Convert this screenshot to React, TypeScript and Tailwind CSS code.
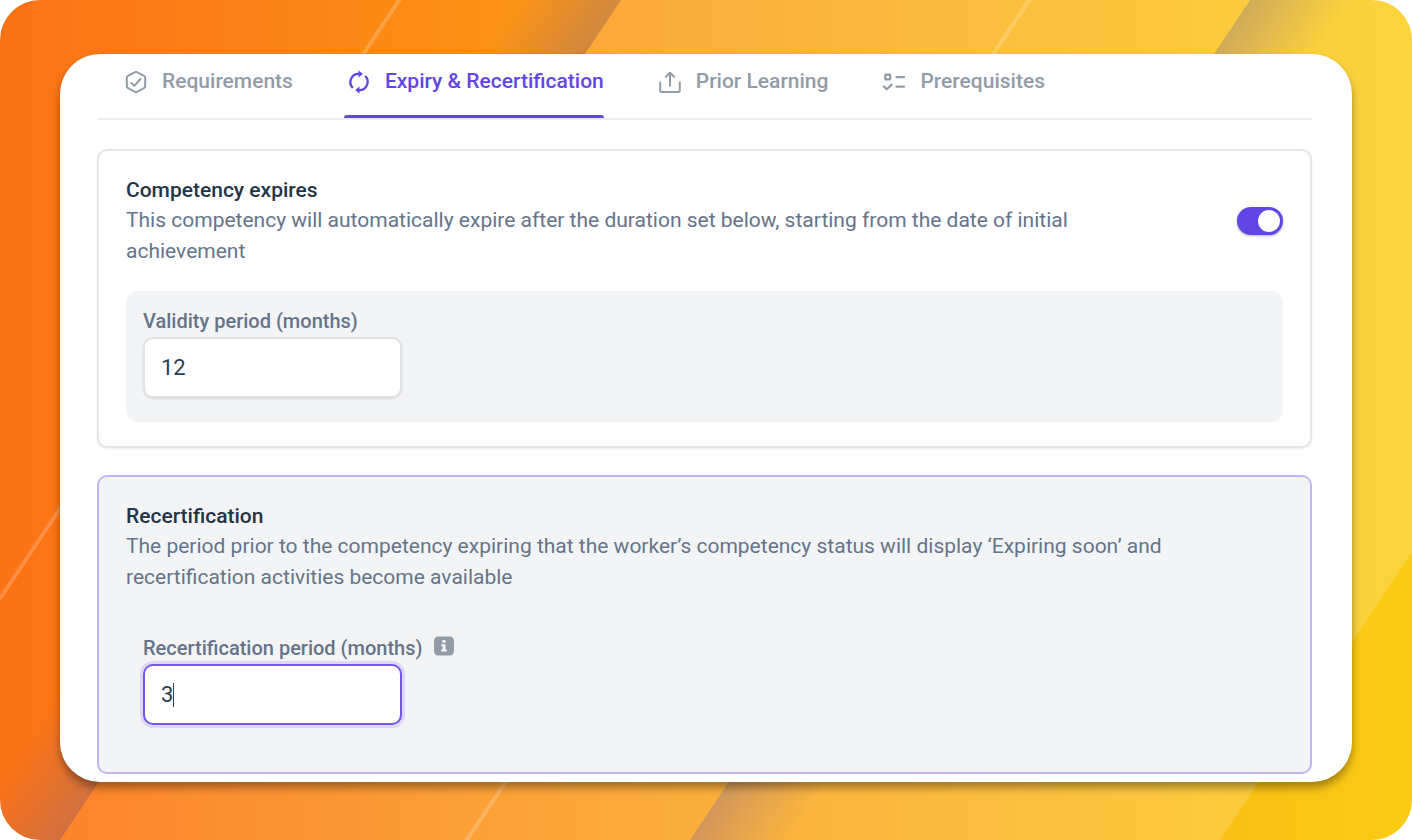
import { useState } from "react";
import type { ReactNode } from "react";
import clsx from "clsx";

interface Tab {
  id: string;
  label: string;
  icon: ReactNode;
}

const tabs: Tab[] = [
  { id: "requirements", label: "Requirements", icon: <HexCheckIcon /> },
  { id: "expiry", label: "Expiry & Recertification", icon: <RenewIcon /> },
  { id: "prior", label: "Prior Learning", icon: <UploadIcon /> },
  { id: "prerequisites", label: "Prerequisites", icon: <ChecklistIcon /> },
];

function HexCheckIcon() {
  return (
    <svg viewBox="0 0 24 24" className="size-6" fill="none" stroke="currentColor" strokeWidth="2" strokeLinecap="round" strokeLinejoin="round">
      <path d="M11 2.1a2.2 2.2 0 0 1 2 0l7 3.7a2.2 2.2 0 0 1 1.2 2v8.4a2.2 2.2 0 0 1-1.2 2l-7 3.7a2.2 2.2 0 0 1-2 0l-7-3.7a2.2 2.2 0 0 1-1.2-2V7.8a2.2 2.2 0 0 1 1.2-2z" />
      <path d="m7.2 13 3.1 2.8 6.2-6.8" />
    </svg>
  );
}

function RenewIcon() {
  return (
    <svg viewBox="0 0 24 24" className="size-6" fill="none" stroke="currentColor" strokeWidth="2.3">
      <path d="M5.8 18A8.3 8.3 0 0 1 12.500 3.900" />
      <path d="M18.2 6A8.3 8.3 0 0 1 11.500 20.100" />
      <path d="M11.500 .2v7.400l4.300-3.700z" fill="currentColor" stroke="none" />
      <path d="M12.500 23.800v-7.400l-4.300 3.700z" fill="currentColor" stroke="none" />
    </svg>
  );
}

function UploadIcon() {
  return (
    <svg viewBox="0 0 24 24" className="size-6" fill="none" stroke="currentColor" strokeWidth="2" strokeLinecap="round" strokeLinejoin="round">
      <path d="M2.2 12.5v8a1.5 1.5 0 0 0 1.5 1.5h16.6a1.5 1.5 0 0 0 1.5-1.5v-8" />
      <path d="M12 15.8V3M7.8 6.9 12 2.7l4.2 4.2" />
    </svg>
  );
}

function ChecklistIcon() {
  return (
    <svg viewBox="0 0 24 24" className="size-6" fill="none" stroke="currentColor" strokeWidth="2.2" strokeLinecap="round" strokeLinejoin="round">
      <rect x="3.3" y="4.6" width="4.8" height="4.8" rx=".3" />
      <path d="M14.5 7.2h7.5M14.5 16.7h7.5" />
      <path d="m1.8 16.4 3 2.9 4.8-4.7" />
    </svg>
  );
}

function InfoIcon() {
  return (
    <svg viewBox="0 0 20 20" className="size-5">
      <rect width="20" height="19" y=".5" rx="4.5" fill="#919ca8" />
      <path d="M8.3 4h3.2v2.7H8.3zM7.2 8.2h4.3v5.4h1.4v2H7.2v-2h1.4v-3.400H7.2z" fill="#f3f4f6" />
    </svg>
  );
}

function Backdrop() {
  return (
    <svg viewBox="0 0 1412 840" preserveAspectRatio="none" className="absolute inset-0 -z-10 size-full" aria-hidden="true">
      <defs>
        <linearGradient id="base" x1="0" x2="1" y1="0" y2="0">
          <stop offset="0" stopColor="#fc7216" />
          <stop offset="1" stopColor="#facc15" />
        </linearGradient>
        <linearGradient id="sheen" x1="0" x2="1" y1="0" y2="0">
          <stop offset="0" stopColor="#fff" stopOpacity=".1" />
          <stop offset=".5" stopColor="#fff" stopOpacity=".17" />
          <stop offset="1" stopColor="#fff" stopOpacity=".17" />
        </linearGradient>
        <linearGradient id="shadeLeft" gradientUnits="userSpaceOnUse" x1="621" y1="0" x2="552" y2="-46">
          <stop offset="0" stopColor="#7060a0" stopOpacity=".3" />
          <stop offset="1" stopColor="#7060a0" stopOpacity="0" />
        </linearGradient>
        <linearGradient id="shadeRight" gradientUnits="userSpaceOnUse" x1="1250" y1="0" x2="1319" y2="46">
          <stop offset="0" stopColor="#7060a0" stopOpacity=".3" />
          <stop offset="1" stopColor="#7060a0" stopOpacity="0" />
        </linearGradient>
      </defs>
      <path d="M0 0h1412v840H0z" fill="url(#base)" />
      <path d="M621 0H0v840h60z" fill="url(#shadeLeft)" />
      <path d="M621 0h791v552l-192 288H60z" fill="url(#sheen)" />
      <path d="M1250 0h162v840H690z" fill="url(#shadeRight)" />
      <path d="M400-1-1 600M1030-1 466 841" stroke="#fff" strokeOpacity=".2" strokeWidth="4" />
    </svg>
  );
}

interface NumberFieldProps {
  id: string;
  label: string;
  value: string;
  onChange: (value: string) => void;
  info?: boolean;
  focused?: boolean;
}

function NumberField({ id, label, value, onChange, info, focused }: NumberFieldProps) {
  return (
    <div>
      <div className="flex items-center gap-3">
        <label htmlFor={id} className="text-[20px] leading-8 font-medium text-[#64748b]">
          {label}
        </label>
        {info && (
          <button type="button" aria-label={`About ${label}`} className="pb-1">
            <InfoIcon />
          </button>
        )}
      </div>
      <div
        className={clsx(
          "relative flex h-[61px] w-[259px] items-center rounded-[10px] border-2 bg-white",
          focused
            ? "border-[#7655ea] shadow-[0_0_0_3px_#ddd8f9]"
            : "border-[#e0e2e5] shadow-[0_1px_2px_rgba(0,0,0,0.12)]"
        )}
      >
        <input
          id={id}
          inputMode="numeric"
          value={value}
          onChange={(e) => onChange(e.target.value)}
          className="size-full bg-transparent px-4 text-[22px] text-[#2c3e50] caret-transparent outline-none"
        />
        {focused && <span className="absolute left-[28px] h-6 w-px bg-[#2c3e50]" />}
      </div>
    </div>
  );
}

export default function App() {
  const [activeTab, setActiveTab] = useState("expiry");
  const [expires, setExpires] = useState(true);
  const [validity, setValidity] = useState("12");
  const [recertification, setRecertification] = useState("3");

  return (
    <div className="relative isolate min-h-screen overflow-hidden rounded-[40px] px-[60px] pt-[54px] pb-[58px] font-[Roboto,sans-serif]">
      <Backdrop />
      <main className="rounded-[40px] bg-white pr-10 pb-2 pl-[37px] shadow-[0_6px_9px_rgba(0,0,0,0.35)]">
        <nav role="tablist" className="flex h-[66px] gap-[51px] border-b-2 border-[#ececee] pl-6">
          {tabs.map((tab) => (
            <button
              key={tab.id}
              type="button"
              role="tab"
              aria-selected={tab.id === activeTab}
              onClick={() => setActiveTab(tab.id)}
              className={clsx(
                "relative flex h-full items-center gap-[14px] pb-2 pl-[3px] text-[21px] font-medium whitespace-nowrap",
                tab.id === activeTab ? "text-[#6246e5]" : "text-[#919ca8]"
              )}
            >
              {tab.icon}
              {tab.label}
              {tab.id === activeTab && (
                <span className="absolute inset-x-0 bottom-0 h-[3px] rounded-t-full bg-[#6246e5]" />
              )}
            </button>
          ))}
        </nav>

        <section className="mt-[29px] rounded-[10px] border-2 border-[#e5e6e8] px-[27px] pt-6 pb-6 shadow-[0_1px_2px_rgba(0,0,0,0.08)]">
          <div className="flex items-center justify-between">
            <div className="max-w-[1060px] text-[21px] leading-[31px] text-[#64748b]">
              <h2 className="leading-[30px] font-medium text-[#243447]">Competency expires</h2>
              <p id="expires-help">
                This competency will automatically expire after the duration set below, starting from the date of
                initial achievement
              </p>
            </div>
            <label className="relative inline-flex cursor-pointer">
              <input
                type="checkbox"
                role="switch"
                aria-label="Competency expires"
                aria-describedby="expires-help"
                checked={expires}
                onChange={(e) => setExpires(e.target.checked)}
                className="peer h-7 w-[46px] appearance-none rounded-full bg-gray-300 shadow-[0_1px_3px_rgba(0,0,0,0.3)] checked:bg-[#6246e5]"
              />
              <span className="pointer-events-none absolute top-[3px] left-[3px] size-[22px] rounded-full bg-white peer-checked:left-[21px]" />
            </label>
          </div>
          <div className="mt-6 rounded-xl bg-[#f3f4f6] px-[17px] pt-[14px] pb-6">
            <NumberField id="validity" label="Validity period (months)" value={validity} onChange={setValidity} />
          </div>
        </section>

        <section className="mt-[27px] rounded-[10px] border-2 border-[#c0b6f1] bg-[#f3f4f6] px-[27px] pt-6 pb-[47px]">
          <div className="max-w-[1060px] text-[21px] leading-[31px] text-[#64748b]">
            <h2 className="leading-[30px] font-medium text-[#243447]">Recertification</h2>
            <p>
              The period prior to the competency expiring that the worker’s competency status will display ‘Expiring
              soon’ and recertification activities become available
            </p>
          </div>
          <div className="mt-[39px] px-[17px]">
            <NumberField
              id="recertification"
              label="Recertification period (months)"
              value={recertification}
              onChange={setRecertification}
              info
              focused
            />
          </div>
        </section>
      </main>
    </div>
  );
}
